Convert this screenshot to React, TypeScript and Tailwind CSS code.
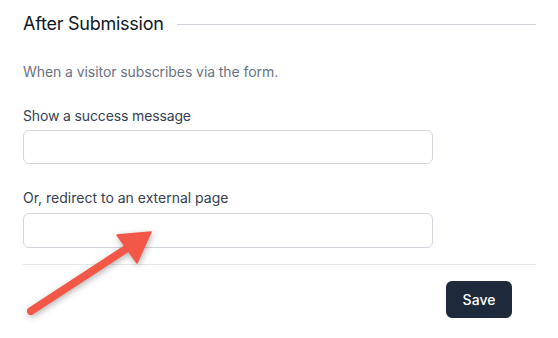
import React from 'react';

export default function App() {
  return (
    <div
      className="relative w-[558px] h-[338px] bg-white overflow-hidden"
      style={{ fontFamily: 'Inter, "Noto Sans", sans-serif' }}
    >
      <div className="pl-[23px] pr-[22px] pt-[10px]">
        {/* Section header */}
        <div className="flex items-center gap-[13px]">
          <h2 className="text-lg leading-7 tracking-[-0.014em] text-gray-900 whitespace-nowrap">After Submission</h2>
          <div className="flex-1 h-px bg-gray-300" />
        </div>

        <p className="mt-[24px] text-sm leading-5 tracking-[-0.005em] text-gray-500">
          When a visitor subscribes via the form.
        </p>

        <div className="mt-[24px] w-[410px]">
          <label className="block text-sm leading-5 tracking-[-0.01em] text-gray-700">Show a success message</label>
          <input
            type="text"
            className="mt-[4px] block w-full h-[34px] rounded-md border border-gray-300 bg-white px-3 text-sm outline-none"
          />
        </div>

        <div className="mt-[24px] w-[410px]">
          <label className="block text-sm leading-5 text-gray-700">Or, redirect to an external page</label>
          <input
            type="text"
            className="mt-[5px] block w-full h-[35px] rounded-md border border-gray-300 bg-white px-3 text-sm outline-none"
          />
        </div>

        <div className="mt-[16px] border-t border-gray-200" />

        <div className="flex justify-end pr-[24px] pt-[16px]">
          <button className="h-[37px] w-[66px] rounded-md bg-[#1e293b] text-sm font-medium text-white">
            Save
          </button>
        </div>
      </div>

      {/* annotation arrow */}
      <svg
        className="absolute left-0 top-0 pointer-events-none"
        width="558"
        height="338"
        viewBox="0 0 558 338"
        style={{ filter: 'drop-shadow(1px 2px 3px rgba(0,0,0,0.3))' }}
      >
        <line x1="31" y1="311" x2="129" y2="247" stroke="#f25747" strokeWidth="8" strokeLinecap="round" />
        <polygon points="151,232 117,235 137,263" fill="#f25747" stroke="#f25747" strokeWidth="1.5" strokeLinejoin="round" />
      </svg>
    </div>
  );
}
